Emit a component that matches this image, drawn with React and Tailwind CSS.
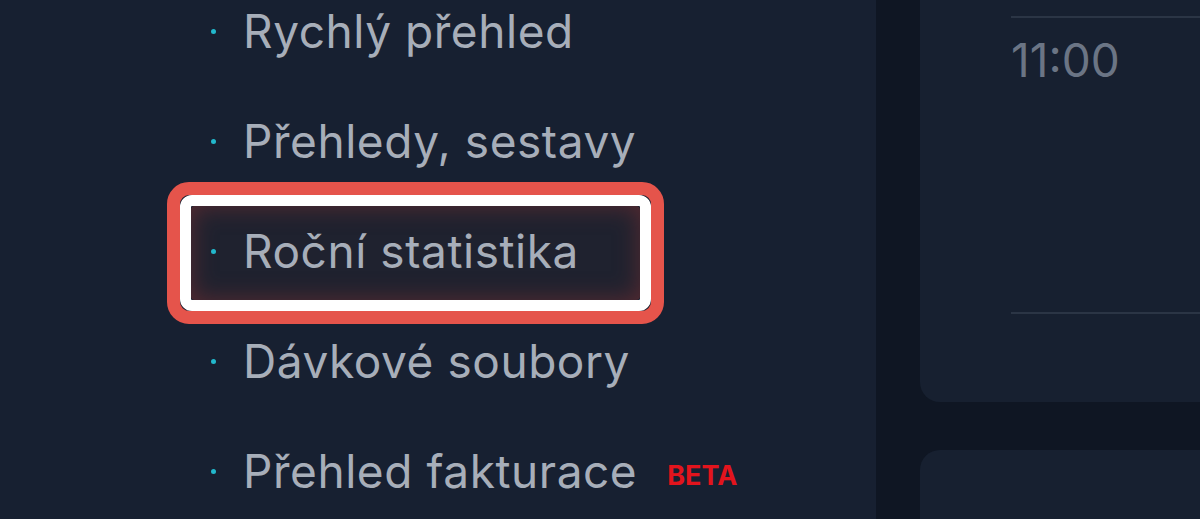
import React from "react";

const items = [
    { label: "Rychlý přehled" },
    { label: "Přehledy, sestavy" },
    { label: "Roční statistika", highlight: true },
    { label: "Dávkové soubory" },
    { label: "Přehled fakturace", beta: true },
];

const NavItem = ({ label, highlight, beta }) => {
    return (
        <li className="relative flex h-[110px] items-center">
            {highlight && (
                <div className="absolute left-[-44px] top-[-14px] h-[142px] w-[497px] rounded-[22px] border-[13px] border-[#e5544b]">
                    <div className="h-full w-full rounded-[12px] border-[11px] border-white">
                        <div className="h-full w-full rounded-[4px] bg-[#1f222f] shadow-[inset_0_0_24px_rgba(110,45,50,0.75)]"></div>
                    </div>
                </div>
            )}
            <span className="relative mr-[27px] h-[5px] w-[5px] rounded-full bg-[#22b8cc]"></span>
            <span className="relative text-[46px] leading-none tracking-[0.55px] text-[#a7aeb9]">{label}</span>
            {beta && (
                <span className="relative ml-[30px] mt-[8px] text-[27px] font-bold leading-none text-[#e3141d]">BETA</span>
            )}
        </li>
    );
};

const App = () => {
    return (
        <div className="flex h-[519px] w-[1200px] overflow-hidden bg-[#0f1623] font-['Inter',sans-serif]">
            <div className="h-full w-[876px] shrink-0 bg-[#172031]">
                <ul className="-mt-[24px] pl-[211px]">
                    {items.map((item) => (
                        <NavItem key={item.label} {...item} />
                    ))}
                </ul>
            </div>
            <div className="ml-[44px] flex flex-1 flex-col gap-[48px]">
                <div className="-mt-[40px] h-[442px] rounded-bl-[20px] bg-[#172030] pl-[91px] pt-[56px]">
                    <div className="h-[2px] bg-[#2b3545]"></div>
                    <div className="mt-[19px] text-[46px] leading-none text-[#6b7585]">11:00</div>
                    <div className="mt-[229px] h-[2px] bg-[#2b3545]"></div>
                </div>
                <div className="flex-1 rounded-tl-[20px] bg-[#172030]"></div>
            </div>
        </div>
    );
};

export default App;
